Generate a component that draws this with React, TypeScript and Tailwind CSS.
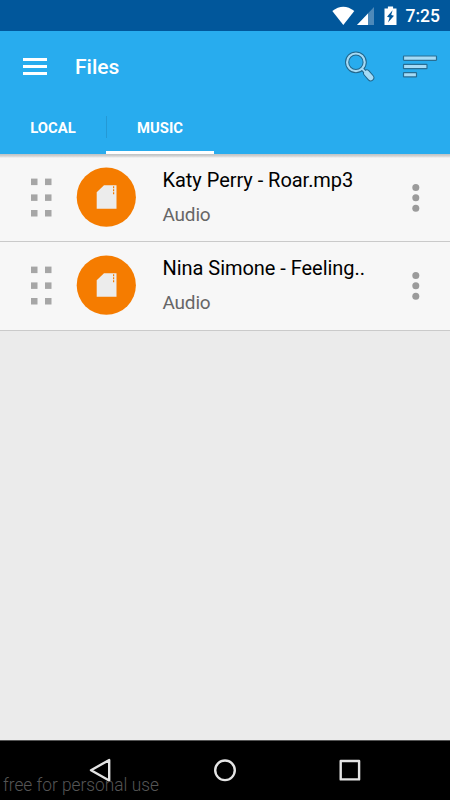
import React from 'react';

function StatusBar() {
  return (
    <div className="flex h-[31px] shrink-0 items-start justify-end bg-[#01579b] pr-[10px]">
      <svg className="h-[31px] w-[72px] shrink-0" viewBox="330 0 72 31">
        <path d="M332.3 11.1Q343.3 2.4 354.3 11.1L343.3 25Z" fill="#fff" />
        <path d="M374 7V25H357Z" fill="#4d89b9" />
        <path d="M368 13.4V25H357Z" fill="#fff" />
        <path d="M384.5 8.5h3.4V6.5h5.2v2h3.4V25h-12Z" fill="#fff" />
        <path d="M392.6 10.2l-5.6 6.6 2.6.7-1.6 5 6-6.8-2.8-.6Z" fill="#01579b" />
      </svg>
      <span className="w-[38px] pt-[6px] text-right text-[17.5px] font-medium leading-[21px] text-white">7:25</span>
    </div>
  );
}

function Header() {
  return (
    <header className="flex h-[123px] shrink-0 flex-col bg-[#28acee] text-white">
      <div className="flex h-[73px] items-start">
        <div className="ml-[23px] mt-[27px] flex w-6 flex-col gap-[4px]">
          <div className="h-[3px] bg-white" />
          <div className="h-[3px] bg-white" />
          <div className="h-[3px] bg-white" />
        </div>
        <h1 className="ml-[28px] mt-[24px] text-[21px] font-medium leading-[25px]">Files</h1>
        <svg className="ml-auto h-[73px] w-[110px]" viewBox="340 31 110 73">
          <circle cx="355.9" cy="62.3" r="8.8" fill="none" stroke="#22668b" strokeWidth="4.2" />
          <path d="M366.8 73.2L370.6 77.6" stroke="#22668b" strokeWidth="7.4" strokeLinecap="round" />
          <path d="M362 68.6L367 74" stroke="#22668b" strokeWidth="4" />
          <circle cx="355.9" cy="62.3" r="8.8" fill="none" stroke="#a5dbf6" strokeWidth="2.2" />
          <path d="M366.8 73.2L370.6 77.6" stroke="#a5dbf6" strokeWidth="5.4" strokeLinecap="round" />
          <path d="M362 68.6L367 74" stroke="#a5dbf6" strokeWidth="1.8" />
          <g fill="#a5dbf6" stroke="#286e94" strokeWidth="1.2">
            <rect x="403.5" y="56" width="33" height="4.3" rx="0.5" />
            <rect x="403.5" y="64.4" width="23.5" height="4.3" rx="0.5" />
            <rect x="403.5" y="72.6" width="13" height="4.3" rx="0.5" />
          </g>
        </svg>
      </div>
      <nav className="flex h-[50px] text-[14.8px] font-bold leading-[17px]">
        <div className="flex w-[106px] justify-center pt-[16px]">LOCAL</div>
        <div className="mt-[12px] h-[22px] w-px bg-[#2499d5]" />
        <div className="-ml-px flex w-[108px] justify-center border-b-[3px] border-white pt-[16px]">MUSIC</div>
      </nav>
    </header>
  );
}

function FileRow({ title, kind, height }: { title: string; kind: string; height: string }) {
  return (
    <div className={`flex ${height} shrink-0 items-start border-b border-[#cacaca] bg-[#f7f7f7]`}>
      <svg className="h-[86px] w-[163px] shrink-0" viewBox="0 0 163 86">
        <g fill="#a6a6a6">
          <rect x="31" y="24.6" width="6.5" height="6.5" />
          <rect x="45" y="24.6" width="6.5" height="6.5" />
          <rect x="31" y="40.4" width="6.5" height="6.5" />
          <rect x="45" y="40.4" width="6.5" height="6.5" />
          <rect x="31" y="56" width="6.5" height="6.5" />
          <rect x="45" y="56" width="6.5" height="6.5" />
        </g>
        <circle cx="106.3" cy="43.2" r="29.6" fill="#f57c00" />
        <path d="M104 31.3H116.5V54.8H96.7V38.3Z" fill="#ececec" />
        <path d="M113.6 32.3v8" stroke="#f57c00" strokeWidth="1.2" strokeDasharray="2 1" />
      </svg>
      <div className="-ml-[0.5px] flex flex-1 flex-col whitespace-nowrap pt-[14px]">
        <span className="text-[20px] leading-6 tracking-[-0.04px] text-black">{title}</span>
        <span className="mt-[11px] text-[19px] leading-6 tracking-[-0.2px] text-[#666]">{kind}</span>
      </div>
      <svg className="h-[86px] w-[44px] shrink-0" viewBox="406 0 44 86" fill="#9b9b9b">
        <circle cx="415.8" cy="33.4" r="3.5" />
        <circle cx="415.8" cy="43.8" r="3.5" />
        <circle cx="415.8" cy="54.2" r="3.5" />
      </svg>
    </div>
  );
}

export default function App() {
  return (
    <div className="flex h-[800px] w-[450px] flex-col overflow-hidden bg-[#ebebeb] font-['Roboto',sans-serif]">
      <StatusBar />
      <Header />
      <main className="relative flex flex-1 flex-col">
        <FileRow title="Katy Perry - Roar.mp3" kind="Audio" height="h-[88px]" />
        <FileRow title="Nina Simone - Feeling.." kind="Audio" height="h-[89px]" />
        <div className="absolute inset-x-0 top-0 h-[4px] bg-linear-to-b from-[#bfc2c4] via-[#d2d2d2] to-[#f7f7f7]" />
      </main>
      <footer className="relative h-[60px] shrink-0 border-t border-[#555] bg-black">
        <svg className="absolute left-0 top-0 h-[59px] w-[450px]" viewBox="0 741 450 59" fill="none" stroke="#e4e4e4" strokeWidth="2.4" strokeLinejoin="round">
          <path d="M109.2 760V780.5L91 770.2Z" />
          <circle cx="225" cy="770.3" r="9.8" />
          <rect x="340.7" y="761" width="18.4" height="18.4" />
        </svg>
        <span className="absolute left-[3px] top-[32px] origin-left scale-x-[0.91] whitespace-nowrap text-[19px] font-light leading-[23px] text-[#555]">
          free for personal use
        </span>
      </footer>
    </div>
  );
}
